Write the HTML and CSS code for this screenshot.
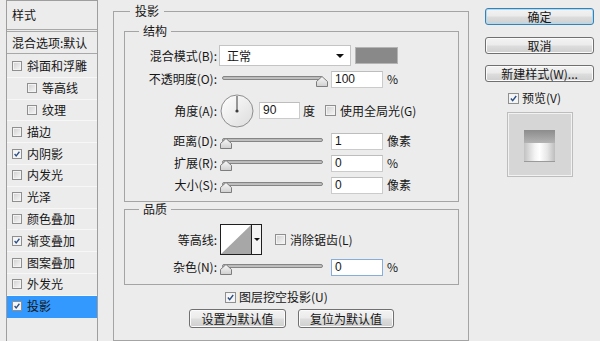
FILE: index.html
```html
<!DOCTYPE html>
<html lang="zh-CN">
<head>
<meta charset="utf-8">
<title>图层样式</title>
<link rel="stylesheet" href="styles.css">
</head>
<body>
<svg class="defs" width="0" height="0" aria-hidden="true">
  <defs>
    <linearGradient id="thumbG" x1="0" y1="0" x2="0" y2="1">
      <stop offset="0" stop-color="#fafafa"/>
      <stop offset="1" stop-color="#cfcfcf"/>
    </linearGradient>
    <linearGradient id="trackG" x1="0" y1="0" x2="0" y2="1">
      <stop offset="0" stop-color="#8a8a8a"/>
      <stop offset="0.5" stop-color="#d4d4d4"/>
      <stop offset="1" stop-color="#9a9a9a"/>
    </linearGradient>
    <linearGradient id="dialG" x1="0" y1="0" x2="1" y2="1">
      <stop offset="0" stop-color="#ffffff"/>
      <stop offset="1" stop-color="#dcdcdc"/>
    </linearGradient>
  </defs>
</svg>
<div class="dialog">
  <aside class="styles-list">
    <div class="list-head">样式</div>
    <div class="list-blend">混合选项:默认</div>
    <ul class="list-items">
      <li class="item"><span class="cb"></span>斜面和浮雕</li>
      <li class="item sub"><span class="cb"></span>等高线</li>
      <li class="item sub"><span class="cb"></span>纹理</li>
      <li class="item"><span class="cb"></span>描边</li>
      <li class="item"><span class="cb checked"><svg viewBox="0 0 10 10"><path d="M2 5 L4 7.5 L8 2.2" fill="none" stroke="#2b4e87" stroke-width="1.6"/></svg></span>内阴影</li>
      <li class="item"><span class="cb"></span>内发光</li>
      <li class="item"><span class="cb"></span>光泽</li>
      <li class="item"><span class="cb"></span>颜色叠加</li>
      <li class="item"><span class="cb checked"><svg viewBox="0 0 10 10"><path d="M2 5 L4 7.5 L8 2.2" fill="none" stroke="#2b4e87" stroke-width="1.6"/></svg></span>渐变叠加</li>
      <li class="item"><span class="cb"></span>图案叠加</li>
      <li class="item"><span class="cb"></span>外发光</li>
      <li class="item selected"><span class="cb checked"><svg viewBox="0 0 10 10"><path d="M2 5 L4 7.5 L8 2.2" fill="none" stroke="#2b4e87" stroke-width="1.6"/></svg></span>投影</li>
    </ul>
  </aside>

  <main class="main">
    <fieldset class="group outer">
      <legend>投影</legend>

      <fieldset class="group inner struct">
        <legend>结构</legend>
        <div class="row r-blend">
          <span class="lbl">混合模式(B):</span>
          <div class="select"><span>正常</span><span class="caret"></span></div>
          <span class="swatch"></span>
        </div>
        <div class="row">
          <span class="lbl">不透明度(O):</span>
          <svg class="slider" viewBox="0 0 108 18" width="108" height="18"><rect x="2.5" y="6.5" width="100" height="3" rx="1.5" fill="url(#trackG)" stroke="#858585"/><path d="M96.5 16.5 V11.5 L102 6.5 L107.5 11.5 V16.5 Z" fill="url(#thumbG)" stroke="#7d7d7d" stroke-linejoin="round"/></svg>
          <span class="num">100</span>
          <span class="unit">%</span>
        </div>
        <div class="row r-angle">
          <span class="lbl">角度(A):</span>
          <svg class="dial" viewBox="0 0 34 34" width="34" height="34"><circle cx="17" cy="17" r="16" fill="url(#dialG)" stroke="#8e8e8e"/><line x1="17" y1="17" x2="17" y2="2" stroke="#3c3c3c"/><circle cx="17" cy="17" r="1.6" fill="#3c3c3c"/></svg>
          <span class="num angle">90</span>
          <span class="unit deg">度</span>
          <span class="cb big gl"></span>
          <span class="cb-text">使用全局光(G)</span>
        </div>
        <div class="row r-dist">
          <span class="lbl">距离(D):</span>
          <svg class="slider" viewBox="0 0 108 18" width="108" height="18"><rect x="2.5" y="6.5" width="100" height="3" rx="1.5" fill="url(#trackG)" stroke="#858585"/><path d="M0.5 16.5 V11.5 L6 6.5 L11.5 11.5 V16.5 Z" fill="url(#thumbG)" stroke="#7d7d7d" stroke-linejoin="round"/></svg>
          <span class="num">1</span>
          <span class="unit">像素</span>
        </div>
        <div class="row">
          <span class="lbl">扩展(R):</span>
          <svg class="slider" viewBox="0 0 108 18" width="108" height="18"><rect x="2.5" y="6.5" width="100" height="3" rx="1.5" fill="url(#trackG)" stroke="#858585"/><path d="M0.5 16.5 V11.5 L6 6.5 L11.5 11.5 V16.5 Z" fill="url(#thumbG)" stroke="#7d7d7d" stroke-linejoin="round"/></svg>
          <span class="num">0</span>
          <span class="unit">%</span>
        </div>
        <div class="row">
          <span class="lbl">大小(S):</span>
          <svg class="slider" viewBox="0 0 108 18" width="108" height="18"><rect x="2.5" y="6.5" width="100" height="3" rx="1.5" fill="url(#trackG)" stroke="#858585"/><path d="M0.5 16.5 V11.5 L6 6.5 L11.5 11.5 V16.5 Z" fill="url(#thumbG)" stroke="#7d7d7d" stroke-linejoin="round"/></svg>
          <span class="num">0</span>
          <span class="unit">像素</span>
        </div>
      </fieldset>

      <fieldset class="group inner quality">
        <legend>品质</legend>
        <div class="row r-contour">
          <span class="lbl">等高线:</span>
          <div class="contour">
            <svg class="curve" viewBox="0 0 30 29" width="30" height="29"><rect width="30" height="29" fill="#fff"/><path d="M0 29 L30 0 V29 Z" fill="#a7a7a7"/></svg>
            <span class="cdrop"><span class="caret small"></span></span>
          </div>
          <span class="cb big aa"></span>
          <span class="cb-text">消除锯齿(L)</span>
        </div>
        <div class="row r-noise">
          <span class="lbl">杂色(N):</span>
          <svg class="slider" viewBox="0 0 108 18" width="108" height="18"><rect x="2.5" y="6.5" width="100" height="3" rx="1.5" fill="url(#trackG)" stroke="#858585"/><path d="M0.5 16.5 V11.5 L6 6.5 L11.5 11.5 V16.5 Z" fill="url(#thumbG)" stroke="#7d7d7d" stroke-linejoin="round"/></svg>
          <span class="num focus">0</span>
          <span class="unit">%</span>
        </div>
      </fieldset>

      <div class="knock">
        <span class="cb big checked"><svg viewBox="0 0 11 11"><path d="M2.3 5.5 L4.5 8.2 L8.8 2.4" fill="none" stroke="#2b4e87" stroke-width="1.7"/></svg></span>
        <span class="cb-text">图层挖空投影(U)</span>
      </div>
      <div class="defaults">
        <button class="btn w97">设置为默认值</button>
        <button class="btn w96">复位为默认值</button>
      </div>
    </fieldset>
  </main>

  <div class="side">
    <button class="btn sbtn ok">确定</button>
    <button class="btn sbtn cancel">取消</button>
    <button class="btn sbtn newstyle">新建样式(W)...</button>
    <div class="preview-row">
      <span class="cb big checked"><svg viewBox="0 0 11 11"><path d="M2.3 5.5 L4.5 8.2 L8.8 2.4" fill="none" stroke="#2b4e87" stroke-width="1.7"/></svg></span>
      <span class="cb-text">预览(V)</span>
    </div>
    <div class="preview">
      <div class="swatch-prev">
        <div class="sp-top"></div>
        <div class="sp-bot"></div>
      </div>
    </div>
  </div>
</div>
</body>
</html>
```

FILE: styles.css
```css
html, body {
  margin: 0;
  padding: 0;
}
body {
  width: 600px;
  height: 341px;
  overflow: hidden;
  background: #ececec;
  color: #161616;
  font-family: "Noto Sans CJK SC", "Liberation Sans", sans-serif;
  font-size: 12px;
  line-height: 14px;
}
.defs {
  display: block;
  width: 0;
  height: 0;
  overflow: hidden;
}
.dialog {
  display: flex;
  align-items: flex-start;
  height: 341px;
  overflow: hidden;
}

/* ---------- left list ---------- */
.styles-list {
  flex: none;
  margin-left: 6px;
  width: 92px;
  height: 341px;
  box-sizing: border-box;
  border: 1px solid #9e9e9e;
  border-bottom: none;
}
.list-head {
  height: 28px;
  line-height: 28px;
  padding-left: 5px;
  border-bottom: 3px double #a8a8a8;
}
.list-blend {
  height: 21px;
  line-height: 21px;
  padding-left: 5px;
  border-bottom: 1px solid #a8a8a8;
  white-space: nowrap;
}
.list-items {
  list-style: none;
  margin: 0;
  padding: 2px 0 0;
}
.item {
  display: flex;
  align-items: center;
  height: 21.8px;
  box-sizing: border-box;
  padding-left: 5px;
  border-bottom: 1px solid #f7f7f7;
  white-space: nowrap;
}
.item.sub {
  padding-left: 20px;
}
.item.selected {
  background: #3399ff;
  border-bottom-color: #3399ff;
}
.item .cb {
  margin-right: 5px;
}

/* ---------- checkbox ---------- */
.cb {
  flex: none;
  display: inline-flex;
  width: 10px;
  height: 10px;
  box-sizing: border-box;
  border: 1px solid #8f8f8f;
  background: linear-gradient(135deg, #cfcfcf, #f8f8f8);
  box-shadow: inset 0 0 0 1px #f3f3f3;
}
.cb.big {
  width: 11px;
  height: 11px;
}
.cb.checked {
  background: #f6f6f6;
}
.cb svg {
  width: 100%;
  height: 100%;
  display: block;
}
.cb-text {
  margin-left: 4px;
  white-space: nowrap;
}

/* ---------- main panel ---------- */
.main {
  flex: none;
  margin-left: 15px;
  width: 356px;
  padding-top: 4px;
}
fieldset.group {
  margin: 0;
  min-width: 0;
  border: 1px solid #a4a4a4;
}
fieldset.group > legend {
  line-height: 14px;
}
.outer {
  padding: 6px 9px 0 10px;
  height: 337px;
  box-sizing: border-box;
  border-bottom: none;
}
.outer > legend {
  margin-left: 6px;
  padding: 0 5px;
}
.inner > legend {
  margin-left: 14px;
  padding: 0 4px;
}
.struct {
  padding: 7px 0 7px;
}
.quality {
  margin-top: 9px;
  padding: 8px 0 8px;
}

.row {
  display: flex;
  align-items: center;
  height: 18px;
  margin-top: 4px;
  white-space: nowrap;
}
.r-blend {
  margin-top: 0;
  height: 21px;
}
.r-angle {
  margin-top: 6px;
  height: 33px;
}
.r-dist {
  margin-top: 5px;
}
.r-contour {
  margin-top: 0;
  height: 31px;
}
.r-noise {
  margin-top: 3px;
}
.lbl {
  flex: none;
  width: 92px;
  text-align: right;
}

.select {
  flex: none;
  margin-left: 2px;
  width: 132px;
  height: 21px;
  box-sizing: border-box;
  border: 1px solid #c4c4c4;
  background: #fff;
  padding: 0 6px 0 7px;
  display: flex;
  align-items: center;
  justify-content: space-between;
}
.caret {
  width: 0;
  height: 0;
  border-left: 4px solid transparent;
  border-right: 4px solid transparent;
  border-top: 4px solid #111;
}
.caret.small {
  border-left-width: 3px;
  border-right-width: 3px;
  border-top-width: 3px;
}
.swatch {
  flex: none;
  margin-left: 4px;
  width: 43px;
  height: 17px;
  box-sizing: border-box;
  background: #898989;
  border: 1px solid #b4b4b4;
}
.slider {
  flex: none;
  display: block;
  margin-left: 3px;
}
.num {
  flex: none;
  margin-left: 3px;
  width: 52px;
  height: 17px;
  box-sizing: border-box;
  border: 1px solid #cbcbcb;
  border-top-color: #bdbdbd;
  background: #fff;
  padding-left: 3px;
  line-height: 15px;
  font-family: "Liberation Sans", "Noto Sans CJK SC", sans-serif;
  font-size: 12px;
}
.num.focus {
  border-color: #86aed8;
}
.unit {
  margin-left: 4px;
}
.dial {
  flex: none;
  display: block;
  margin-left: 3px;
}
.num.angle {
  margin-left: 5px;
  width: 41px;
}
.unit.deg {
  margin-left: 3px;
}
.cb.gl {
  margin-left: 10px;
}

.contour {
  flex: none;
  margin-left: 3px;
  width: 42px;
  height: 31px;
  box-sizing: border-box;
  border: 1px solid #1f1f1f;
  display: flex;
  background: #fff;
}
.curve {
  display: block;
  flex: none;
}
.cdrop {
  flex: 1;
  border-left: 1px solid #1f1f1f;
  display: flex;
  align-items: center;
  justify-content: center;
  background: #f4f4f4;
}
.cb.aa {
  margin-left: 13px;
}

.knock {
  display: flex;
  align-items: center;
  height: 14px;
  margin-top: 5px;
  padding-left: 101px;
}
.knock .cb-text {
  margin-left: 3px;
}
.defaults {
  display: flex;
  justify-content: center;
  gap: 12px;
  margin-top: 5px;
}

.btn {
  display: block;
  margin: 0;
  padding: 0;
  height: 19px;
  box-sizing: border-box;
  border: 1px solid #707070;
  border-radius: 3px;
  background: linear-gradient(#f3f3f3 0%, #ebebeb 48%, #dddddd 52%, #cfcfcf 100%);
  box-shadow: inset 0 0 0 1px #fbfbfb;
  color: #161616;
  font-family: "Noto Sans CJK SC", "Liberation Sans", sans-serif;
  font-size: 12px;
  line-height: 15px;
  text-align: center;
}
.w97 { width: 97px; }
.w96 { width: 96px; }

/* ---------- right side ---------- */
.side {
  flex: none;
  margin-left: 16px;
  width: 109px;
  padding-top: 8px;
}
.sbtn {
  width: 109px;
  height: 17px;
}
.ok {
  border-color: #3c7fb1;
  box-shadow: inset 0 0 0 1px #a9dcf7;
}
.cancel {
  margin-top: 12px;
}
.newstyle {
  margin-top: 11px;
}
.preview-row {
  display: flex;
  align-items: center;
  height: 14px;
  margin-top: 9px;
  padding-left: 23px;
}
.preview-row .cb-text {
  margin-left: 3px;
}
.preview {
  margin-top: 7px;
  margin-left: 22px;
  width: 66px;
  height: 65px;
  box-sizing: border-box;
  border: 1px solid #bdbdbd;
  box-shadow: inset 0 0 0 1px #f2f2f2;
  background: #d6d6d6;
  padding: 17px 0 0 16px;
}
.swatch-prev {
  width: 31px;
  height: 32px;
  display: flex;
  flex-direction: column;
}
.sp-top {
  height: 13px;
  background: linear-gradient(#8c8c8c, #b3b3b3);
}
.sp-bot {
  flex: 1;
  background: linear-gradient(90deg, #c2c2c2 0%, #f4f4f4 35%, #ffffff 50%, #e6e6e6 75%, #bdbdbd 100%);
  border-bottom: 1px solid #9a9a9a;
}
```
